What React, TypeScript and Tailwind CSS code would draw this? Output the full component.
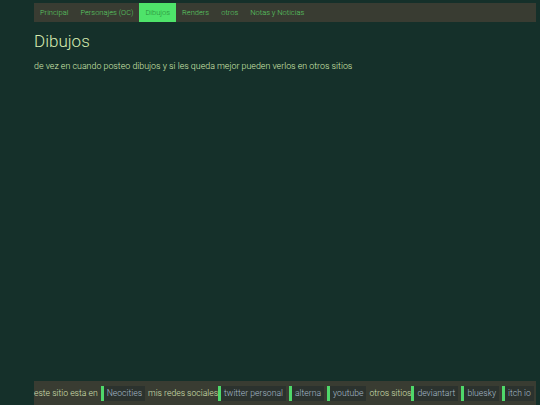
const navItems = ["Principal", "Personajes (OC)", "Dibujos", "Renders", "otros", "Notas y Noticias"];

function FooterLink({ label, first }: { label: string; first?: boolean }) {
  return (
    <span
      className={`flex h-[15px] items-center whitespace-nowrap border-l-[3px] border-[#4fd86a] bg-[#2b322e] px-[3px] text-[#a9bccb] ${
        first ? "" : "ml-[3px]"
      }`}
    >
      {label}
    </span>
  );
}

export default function App() {
  return (
    <div
      className="flex h-[405px] flex-col overflow-hidden bg-[#15302a] pl-[34px] pr-[4px]"
      style={{ fontFamily: "Roboto, 'Liberation Sans', sans-serif" }}
    >
      {/* nav */}
      <nav className="mt-[3px] flex h-[19px] items-stretch bg-[#393c32] text-[7.5px] text-[#5cd266]">
        {navItems.map((item) => (
          <a
            key={item}
            className={`flex items-center whitespace-nowrap px-[6px] font-light ${
              item === "Dibujos" ? "bg-[#4ee36a] text-[#268a38]" : ""
            }`}
          >
            {item}
          </a>
        ))}
      </nav>

      {/* content */}
      <h1 className="mt-[8px] text-[17px] font-light leading-[22px] text-[#d6ebb0]">Dibujos</h1>
      <p className="mt-[8px] text-[8.85px] font-light leading-[12px] text-[#d6ebb0]">
        de vez en cuando posteo dibujos y si les queda mejor pueden verlos en otros sitios
      </p>

      {/* footer */}
      <footer className="mt-auto flex h-[24px] items-center whitespace-nowrap bg-[#393c32] text-[8.65px] font-light text-[#d6e0b4]">
        <span>este sitio esta en</span>
        <FooterLink label="Neocities" />
        <span className="ml-[3px]">mis redes sociales</span>
        <FooterLink label="twitter personal" first />
        <FooterLink label="alterna" />
        <FooterLink label="youtube" />
        <span className="ml-[3px]">otros sitios</span>
        <FooterLink label="deviantart" first />
        <FooterLink label="bluesky" />
        <FooterLink label="itch io" />
      </footer>
    </div>
  );
}
